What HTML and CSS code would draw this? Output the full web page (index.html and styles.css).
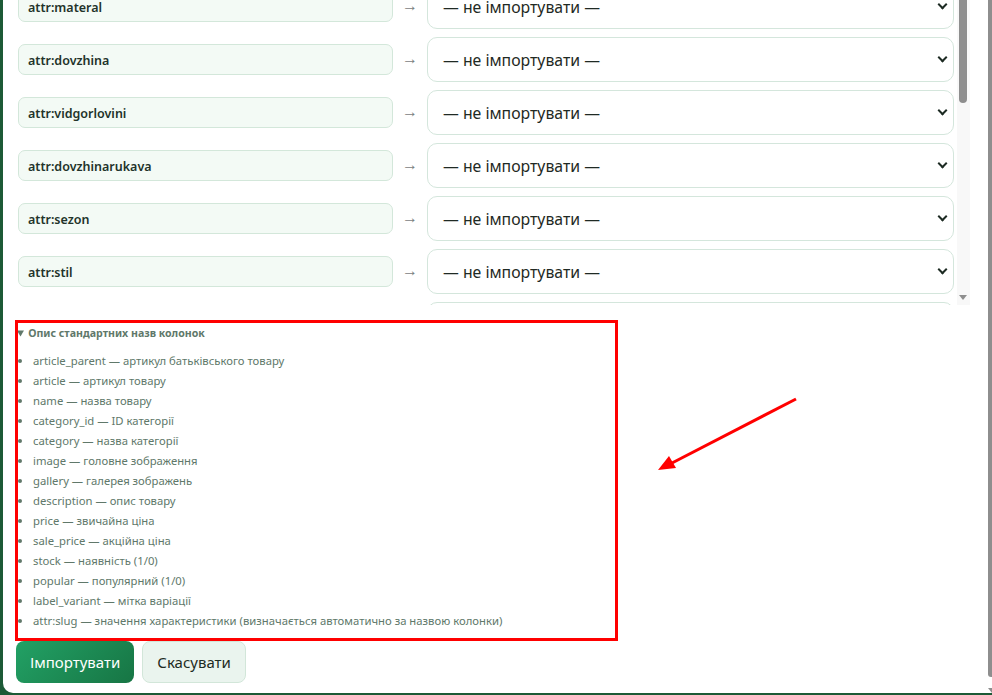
FILE: index.html
```html
<!doctype html>
<html>
<head>
    <title>Імпорт товарів</title>
    <link rel="stylesheet" href="styles.css">
</head>

<body>
    <div class="modal">
        <div class="content">
            <div class="map-area">
                <div class="map-view">
                    <div class="map-list">
                        <div class="map-row">
                            <div class="col-name">attr:materal</div>
                            <span class="arrow">→</span>
                            <div class="col-select">— не імпортувати —<span class="chev"></span></div>
                        </div>
                        <div class="map-row">
                            <div class="col-name">attr:dovzhina</div>
                            <span class="arrow">→</span>
                            <div class="col-select">— не імпортувати —<span class="chev"></span></div>
                        </div>
                        <div class="map-row">
                            <div class="col-name">attr:vidgorlovini</div>
                            <span class="arrow">→</span>
                            <div class="col-select">— не імпортувати —<span class="chev"></span></div>
                        </div>
                        <div class="map-row">
                            <div class="col-name">attr:dovzhinarukava</div>
                            <span class="arrow">→</span>
                            <div class="col-select">— не імпортувати —<span class="chev"></span></div>
                        </div>
                        <div class="map-row">
                            <div class="col-name">attr:sezon</div>
                            <span class="arrow">→</span>
                            <div class="col-select">— не імпортувати —<span class="chev"></span></div>
                        </div>
                        <div class="map-row">
                            <div class="col-name">attr:stil</div>
                            <span class="arrow">→</span>
                            <div class="col-select">— не імпортувати —<span class="chev"></span></div>
                        </div>
                        <div class="map-row">
                            <div class="col-name">attr:kolir</div>
                            <span class="arrow">→</span>
                            <div class="col-select">— не імпортувати —<span class="chev"></span></div>
                        </div>
                    </div>
                </div>
                <div class="sbar">
                    <div class="sbar-thumb"></div>
                    <div class="sbar-down"></div>
                </div>
            </div>

            <details class="help" open>
                <summary>Опис стандартних назв колонок</summary>
                <ul>
                    <li>article_parent — артикул батьківського товару</li>
                    <li>article — артикул товару</li>
                    <li>name — назва товару</li>
                    <li>category_id — ID категорії</li>
                    <li>category — назва категорії</li>
                    <li>image — головне зображення</li>
                    <li>gallery — галерея зображень</li>
                    <li>description — опис товару</li>
                    <li>price — звичайна ціна</li>
                    <li>sale_price — акційна ціна</li>
                    <li>stock — наявність (1/0)</li>
                    <li>popular — популярний (1/0)</li>
                    <li>label_variant — мітка варіації</li>
                    <li>attr:slug — значення характеристики (визначається автоматично за назвою колонки)</li>
                </ul>
            </details>

            <div class="actions">
                <button class="btn btn-primary">Імпортувати</button>
                <button class="btn btn-cancel">Скасувати</button>
            </div>
        </div>
        <div class="vbar">
            <div class="vbar-thumb"></div>
            <div class="vbar-down"></div>
        </div>
    </div>

    <!-- annotation drawn over the screenshot -->
    <div class="note-box"></div>
    <svg class="note-arrow" width="992" height="695" viewBox="0 0 992 695">
        <line x1="796" y1="399" x2="672" y2="463" stroke="#ff0000" stroke-width="3" />
        <polygon points="658,470 669,456 676,468" fill="#ff0000" />
    </svg>
</body>
</html>
```

FILE: styles.css
```css
html, body {
    margin: 0;
    height: 695px;
    overflow: hidden;
}
body {
    background: #1c5a36;
    font-family: "Noto Sans", "Open Sans", sans-serif;
    display: flex;
    align-items: flex-start;
    padding-left: 3px;
    box-sizing: border-box;
}
.modal {
    flex: 1;
    height: 693px;
    background: #ffffff;
    border-radius: 0 0 0 10px;
    display: flex;
    overflow: hidden;
}
.content {
    flex: 1;
    padding-left: 15px;
    padding-right: 18px;
    display: flex;
    flex-direction: column;
}
.map-area {
    display: flex;
    height: 305px;
}
.map-view {
    flex: 1;
    overflow: hidden;
    padding-right: 3px;
}
.map-list {
    margin-top: -16px;
    display: flex;
    flex-direction: column;
    gap: 8px;
}
.map-row {
    display: flex;
    align-items: center;
    height: 45px;
}
.col-name {
    width: 375px;
    height: 31px;
    box-sizing: border-box;
    border: 1px solid #d3e7da;
    border-radius: 7px;
    background: #f3faf5;
    padding: 1px 0 0 9px;
    font-size: 12.5px;
    font-weight: 600;
    color: #22332a;
    display: flex;
    align-items: center;
}
.arrow {
    width: 34px;
    text-align: center;
    font-size: 16px;
    line-height: 16px;
    margin-top: -4px;
    color: #7b817e;
}
.col-select {
    flex: 1;
    height: 45px;
    box-sizing: border-box;
    border: 1px solid #d4e6dc;
    border-radius: 10px;
    background: #ffffff;
    padding-left: 15px;
    padding-right: 7px;
    font-size: 15.8px;
    color: #1f2a24;
    display: flex;
    align-items: center;
    justify-content: space-between;
}
.chev {
    width: 5px;
    height: 5px;
    border-right: 2.5px solid #1d2b23;
    border-bottom: 2.5px solid #1d2b23;
    transform: rotate(45deg);
    margin-top: -4px;
}
.sbar {
    width: 13px;
    background: #f8f8f8;
    position: relative;
}
.sbar-thumb {
    width: 8px;
    height: 103px;
    margin-left: 2px;
    background: #8e8e8e;
    border-radius: 0 0 4px 4px;
}
.sbar-down {
    position: absolute;
    left: 2px;
    bottom: 5px;
    width: 0;
    height: 0;
    border-left: 4px solid transparent;
    border-right: 4px solid transparent;
    border-top: 5px solid #8e8e8e;
}
.help {
    margin-top: 21px;
    margin-left: -1px;
    color: #60786a;
}
.help summary {
    font-size: 10.6px;
    font-weight: 700;
    line-height: 15px;
    cursor: pointer;
}
.help ul {
    margin: 10px 0 0 1px;
    padding-left: 15px;
    font-size: 11.3px;
    line-height: 20px;
}
.actions {
    margin-top: 10px;
    margin-left: -2px;
    display: flex;
    gap: 8px;
}
.btn {
    height: 42px;
    border-radius: 8px;
    font-family: "Noto Sans", "Open Sans", sans-serif;
    font-size: 15px;
    padding: 0 14px;
    cursor: pointer;
}
.btn-primary {
    background: linear-gradient(135deg, #22a165, #177544);
    color: #ffffff;
    border: none;
}
.btn-cancel {
    background: #eaf4ee;
    color: #1d2b23;
    border: 1px solid #d2e6d9;
}
.vbar {
    width: 4px;
    position: relative;
}
.vbar-thumb {
    height: 677px;
    background: #8e8e8e;
    border-radius: 0 0 0 3px;
}
.vbar-down {
    position: absolute;
    left: 0;
    top: 688px;
    width: 0;
    height: 0;
    border-left: 4px solid transparent;
    border-top: 5px solid #8e8e8e;
}
.note-box {
    position: absolute;
    left: 15px;
    top: 320px;
    width: 597px;
    height: 315px;
    border: 3px solid #ff0000;
}
.note-arrow {
    position: absolute;
    left: 0;
    top: 0;
    pointer-events: none;
}
```
